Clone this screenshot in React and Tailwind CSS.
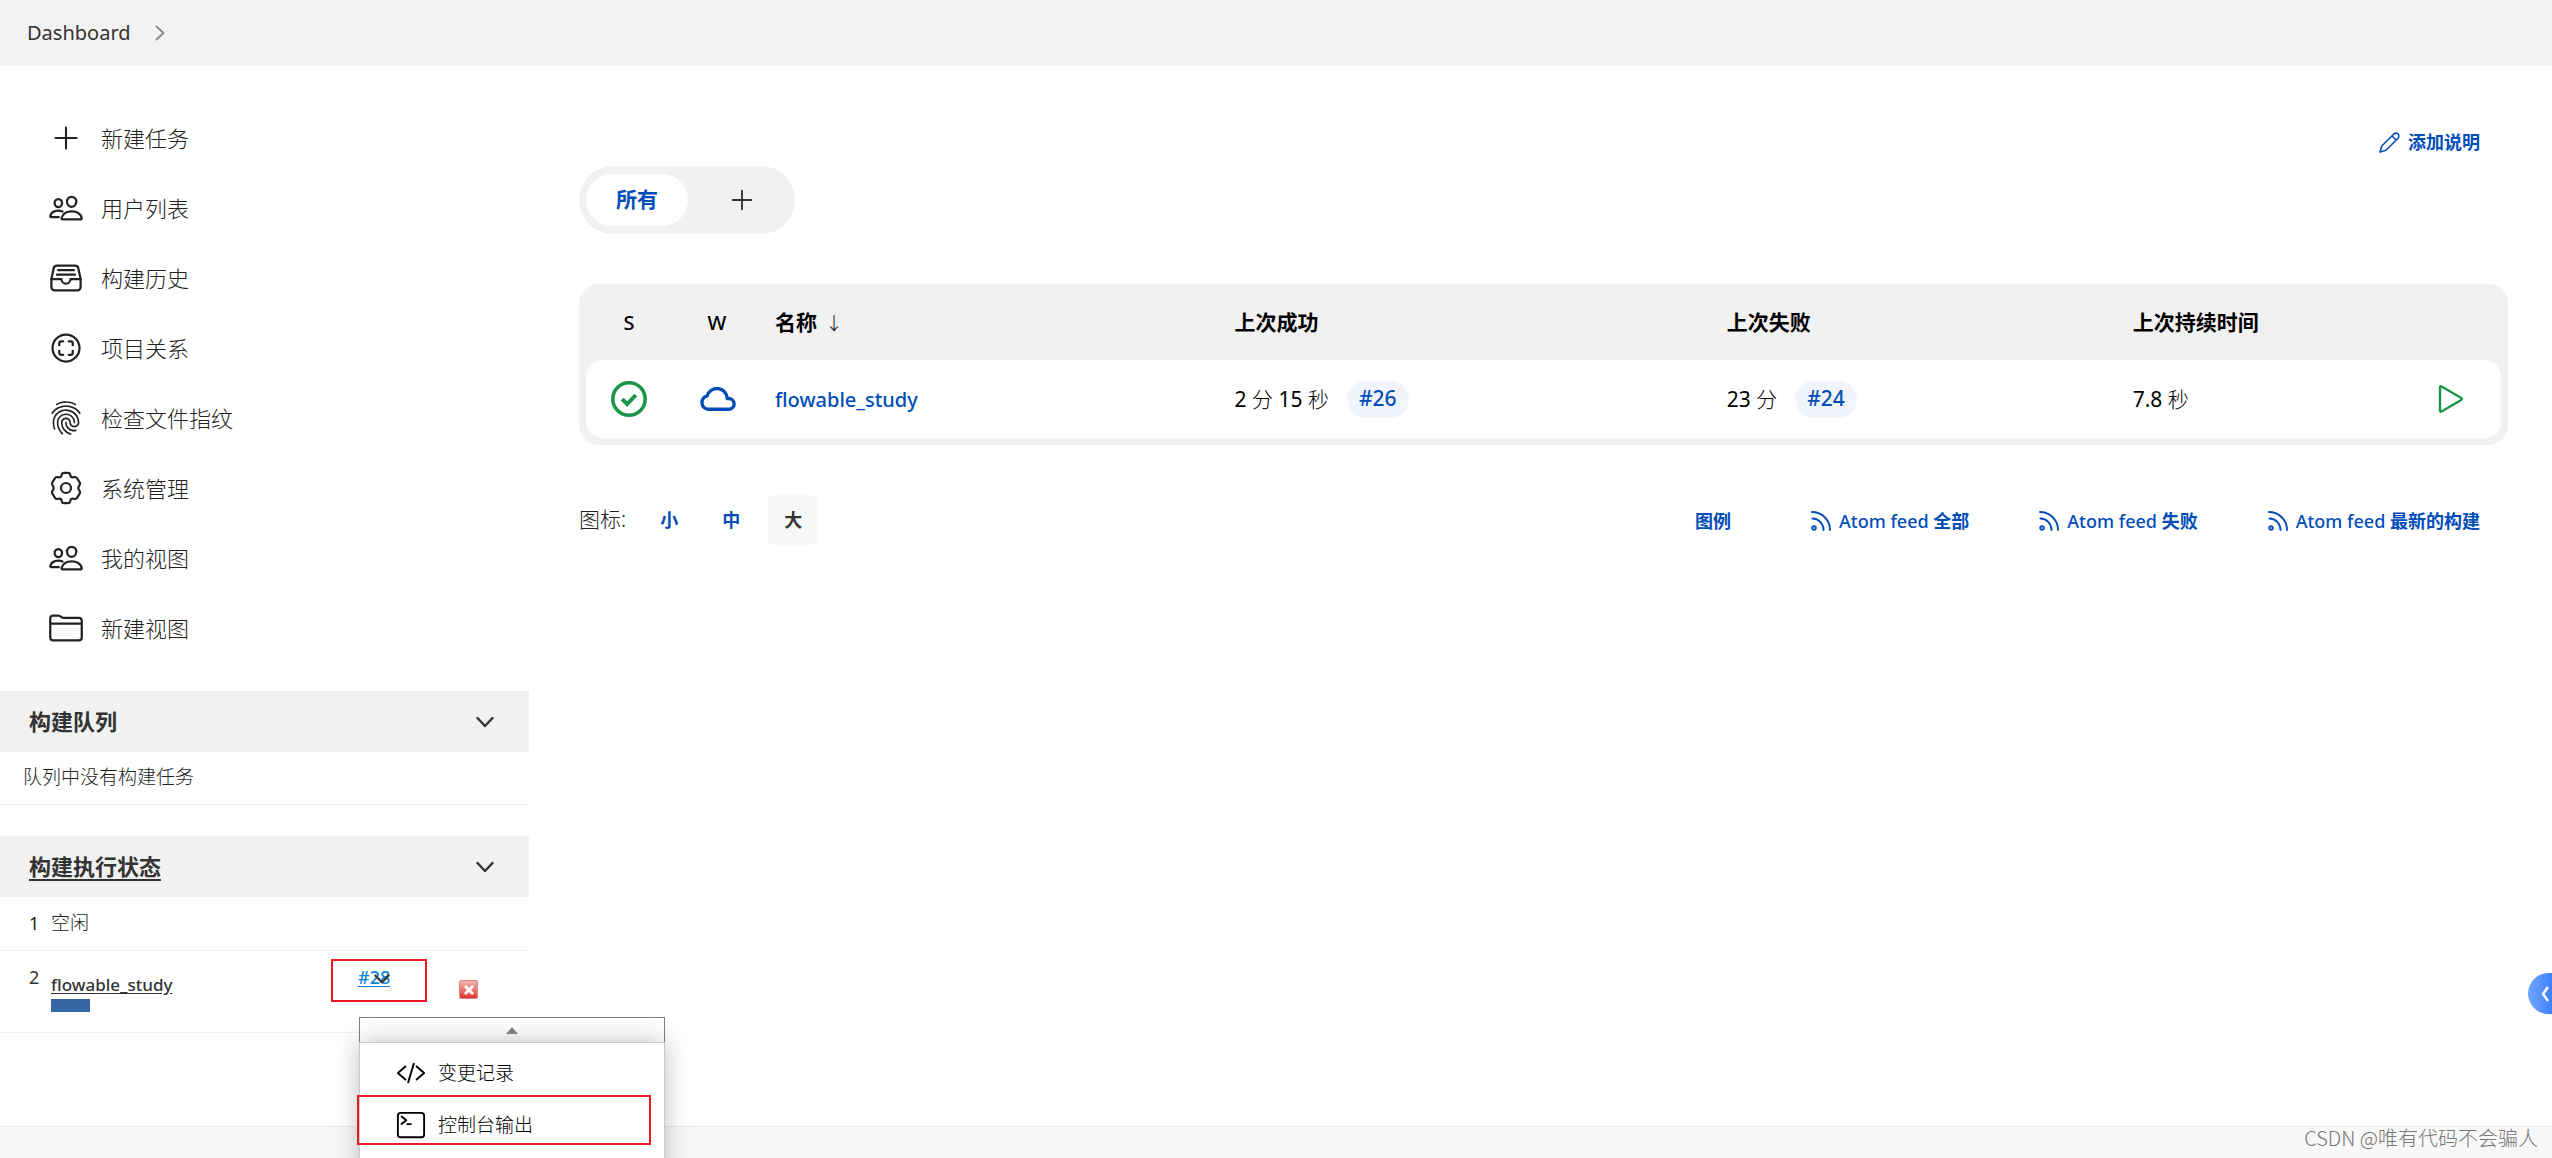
import React from "react";
import {
  IoPeopleOutline,
  IoFileTrayFullOutline,
  IoScanCircleOutline,
  IoFingerPrintOutline,
  IoFolderOutline,
  IoCodeSlashOutline,
  IoTerminalOutline,
} from "react-icons/io5";

function Plus({ className }) {
  return (
    <svg viewBox="0 0 24 24" className={className} fill="none" stroke="currentColor" strokeWidth="1.4" strokeLinecap="round">
      <path d="M12 5v14M5 12h14" />
    </svg>
  );
}

function Gear({ className }) {
  return (
    <svg viewBox="0 0 36 36" className={className} fill="none" stroke="currentColor" strokeWidth="2.2" strokeLinejoin="round">
      <circle cx="18" cy="18" r="5" />
      <path d="M15.800 2.800H20.200Q21.600 2.800 22 4.200L22.500 5.800Q23 7.500 24.800 7.300L26.800 7Q28.300 6.900 29 8.100L31.800 12.600Q32.500 13.800 31.600 15L30.800 16.200Q29.900 18 30.800 19.800L31.600 21Q32.500 22.200 31.800 23.400L29 27.900Q28.300 29.100 26.800 29L24.800 28.700Q23 28.500 22.500 30.200L22 31.800Q21.600 33.200 20.200 33.200H15.800Q14.400 33.200 14 31.800L13.500 30.200Q13 28.500 11.200 28.700L9.200 29Q7.700 29.100 7 27.900L4.200 23.400Q3.500 22.200 4.400 21L5.200 19.800Q6.100 18 5.200 16.200L4.400 15Q3.500 13.800 4.200 12.600L7 8.100Q7.700 6.900 9.200 7L11.200 7.300Q13 7.500 13.500 5.800L14 4.200Q14.400 2.800 15.800 2.800Z" />
    </svg>
  );
}

function Chevron({ className }) {
  return (
    <svg viewBox="0 0 18 18" className={className} fill="none" stroke="currentColor" strokeWidth="2.4" strokeLinecap="round" strokeLinejoin="round">
      <path d="M1.500 5 9 13l7.500-8" />
    </svg>
  );
}

function Rss() {
  return (
    <svg viewBox="0 0 20 20" className="size-5 shrink-0" fill="none" stroke="currentColor" strokeWidth="1.900" strokeLinecap="round">
      <path d="M1 1c10 0 18 8 18 18M1.500 7.500c6 0 11 5 11 11.500" />
      <circle cx="3" cy="17" r="1.800" />
    </svg>
  );
}

function Pencil() {
  return (
    <svg viewBox="0 0 21 21" className="size-[21px] shrink-0" fill="none" stroke="currentColor" strokeWidth="1.600" strokeLinejoin="round">
      <path d="M1 20l1.800-6L14.800 2a2.700 2.700 0 0 1 4.200 4.200L7 18.200zM13 4l4 4" />
    </svg>
  );
}

const tasks = [
  ["新建任务", Plus],
  ["用户列表", IoPeopleOutline],
  ["构建历史", IoFileTrayFullOutline],
  ["项目关系", IoScanCircleOutline],
  ["检查文件指纹", IoFingerPrintOutline],
  ["系统管理", Gear],
  ["我的视图", IoPeopleOutline],
  ["新建视图", IoFolderOutline],
];

function PaneHeader({ children }) {
  return (
    <div className="flex h-[61px] items-center justify-between bg-[#f1f1f1] pr-[35px] pl-[29px]">
      <h2 className="text-[22px] font-bold">{children}</h2>
      <button type="button" aria-label="折叠">
        <Chevron className="size-[18px]" />
      </button>
    </div>
  );
}

function BuildMenu() {
  return (
    <div className="absolute top-[66px] left-[359px] z-10 w-[306px] text-[19px] font-light text-black">
      <button type="button" aria-label="向上滚动" className="flex h-[25px] w-full items-center justify-center border border-b-0 border-[#808080] bg-white">
        <svg viewBox="0 0 12 7" className="h-[7px] w-3">
          <path d="M6 0l6 7H0z" fill="#808080" />
        </svg>
      </button>
      <ul className="h-[140px] border border-[#c3ccd1] bg-white pt-1 shadow-[0_0_24px_rgba(0,0,0,0.25)]">
        <li>
          <a href="#changes" className="flex h-[52px] items-center gap-3 pl-9">
            <IoCodeSlashOutline className="size-[30px]" />
            变更记录
          </a>
        </li>
        <li>
          <a href="#console" className="relative flex h-[52px] items-center gap-3 pl-9">
            <IoTerminalOutline className="size-[30px]" />
            控制台输出
            <span className="absolute -top-1 -left-[3px] h-[50px] w-[294px] border-2 border-[#ed1c24]" />
          </a>
        </li>
      </ul>
    </div>
  );
}

function Sidebar() {
  return (
    <aside className="w-[529px] shrink-0">
      <nav className="pt-[37px] pb-[28px] text-[#222]">
        {tasks.map(([label, Icon]) => (
          <a key={label} href="#task" className="flex h-[70px] items-center gap-[17px] pl-[48px] text-[22px] font-light">
            <Icon className="size-9" />
            {label}
          </a>
        ))}
      </nav>
      <section>
        <PaneHeader>构建队列</PaneHeader>
        <p className="h-[53px] border-b border-[#efefef] pl-[23px] text-[19px] leading-[51px] font-light text-[#222]">队列中没有构建任务</p>
      </section>
      <section className="mt-[31px]">
        <PaneHeader>
          <a href="#executors" className="underline underline-offset-4">构建执行状态</a>
        </PaneHeader>
        <div className="flex h-[54px] items-center border-b border-[#efefef] pl-[29px] text-[19px] font-light text-[#222]">
          <span className="w-[22px] text-[18px] font-normal">1</span>空闲
        </div>
        <div className="relative flex h-[82px] border-b border-[#efefef] pl-[29px] text-[18px]">
          <span className="w-[22px] pt-[13px]">2</span>
          <div className="w-[307px] pt-[20px]">
            <a href="#job" className="block text-[17px] leading-7 font-medium underline underline-offset-2">flowable_study</a>
            <div className="h-[13px] w-[39px] bg-[#3465a4]" />
          </div>
          <a href="#28" className="relative h-7 pt-[13px] font-medium text-[#0b84d8] underline underline-offset-2">
            #28
            <Chevron className="absolute top-[20px] left-[16px] size-4 text-[#333]" />
          </a>
          <span className="absolute top-[8px] left-[331px] h-[43px] w-[96px] border-2 border-[#ed1c24]" />
          <button type="button" aria-label="终止" className="absolute top-[29px] left-[459px] flex size-[19px] items-center justify-center rounded-xs border border-[#e08080] bg-linear-to-b from-[#f0b4b4] to-[#dc3030]">
            <svg viewBox="0 0 10 10" className="size-[10px]" stroke="#fff" strokeWidth="2.800">
              <path d="M1 1l8 8M9 1L1 9" />
            </svg>
          </button>
          <BuildMenu />
        </div>
      </section>
    </aside>
  );
}

function Badge({ children }) {
  return (
    <a href="#build" className="ml-[18px] inline-flex h-[37px] items-center rounded-full bg-[#f1f5fb] px-3 font-medium text-[#004db8]">
      {children}
    </a>
  );
}

function Unit({ children }) {
  return <span className="font-light">{children}</span>;
}

function Feed({ children }) {
  return (
    <a href="#feed" className="flex items-center gap-2">
      <Rss />
      <span className="font-medium">
        Atom feed <b>{children}</b>
      </span>
    </a>
  );
}

function JobTable() {
  return (
    <div className="rounded-[20px] bg-[#f1f1f1] px-[7px] pb-[7px]">
      <table className="w-full table-fixed border-separate border-spacing-0 text-left text-[21px] text-black">
        <colgroup>
          <col className="w-[86px]" />
          <col className="w-[90px]" />
          <col className="w-[24%]" />
          <col className="w-[25.7%]" />
          <col className="w-[21.2%]" />
          <col />
          <col className="w-[100px]" />
        </colgroup>
        <thead>
          <tr className="h-[76px] [&>th]:pt-0.5">
            <th className="text-center text-[20px] font-medium">S</th>
            <th className="text-center text-[20px] font-medium">W</th>
            <th className="pl-[13px] font-bold">
              名称<span className="ml-2 text-[18px] font-light">↓</span>
            </th>
            <th className="pl-[13px] font-bold">上次成功</th>
            <th className="pl-[13px] font-bold">上次失败</th>
            <th className="pl-[13px] font-bold">上次持续时间</th>
            <th aria-label="操作" />
          </tr>
        </thead>
        <tbody>
          <tr className="h-[78px] [&>td]:bg-white">
            <td className="rounded-l-2xl">
              <svg viewBox="0 0 36 36" className="mx-auto size-9" fill="none" stroke="#1b9448">
                <circle cx="18" cy="18" r="16.200" strokeWidth="3.600" />
                <path d="M11.200 18.200l5 5 8.600-9.200" strokeWidth="4" />
              </svg>
            </td>
            <td>
              <svg viewBox="0 0 37 24" className="mx-auto h-6 w-[37px]" fill="none" stroke="#004db8" strokeWidth="3.400" strokeLinejoin="round">
                <path d="M8.500 22.200a6.800 6.800 0 0 1-.3-13.300a10.200 10.200 0 0 1 20 2.600h1.300a5.300 5.300 0 0 1 .5 10.700z" />
              </svg>
            </td>
            <td className="pt-0.5 pl-[13px]">
              <a href="#job" className="text-[20px] font-medium text-[#004db8]">flowable_study</a>
            </td>
            <td className="pl-[13px]">
              2 <Unit>分</Unit> 15 <Unit>秒</Unit>
              <Badge>#26</Badge>
            </td>
            <td className="pl-[13px]">
              23 <Unit>分</Unit>
              <Badge>#24</Badge>
            </td>
            <td className="pt-0.5 pl-[13px]">
              7.8 <Unit>秒</Unit>
            </td>
            <td className="rounded-r-2xl">
              <button type="button" aria-label="构建" className="mx-auto block">
                <svg viewBox="0 0 26 28" className="h-7 w-[26px]" fill="none" stroke="#1b9448" strokeWidth="2.400" strokeLinejoin="round">
                  <path d="M2 2.400Q2 .6 3.600 1.500L23.200 13Q24.700 14 23.200 15L3.600 26.500Q2 27.400 2 25.600Z" />
                </svg>
              </button>
            </td>
          </tr>
        </tbody>
      </table>
    </div>
  );
}

export default function App() {
  return (
    <div className="relative flex min-h-screen flex-col overflow-hidden bg-white font-['Noto_Sans','Noto_Sans_CJK_SC',sans-serif] text-[#333]">
      <header className="flex h-[66px] items-center gap-6 bg-[#f2f2f2] pl-[27px] text-[20px]">
        <a href="#dashboard">Dashboard</a>
        <svg viewBox="0 0 10 16" className="h-4 w-[10px]" fill="none" stroke="#888" strokeWidth="1.800" strokeLinecap="round" strokeLinejoin="round">
          <path d="M1.500 1.500 8.500 8l-7 6.500" />
        </svg>
      </header>
      <div className="flex grow">
        <Sidebar />
        <main className="min-w-0 grow pr-[44px] pl-[50px]">
          <div className="flex h-[100px] justify-end pt-[61px] pr-[28px]">
            <a href="#edit" className="flex h-[30px] items-center gap-2 text-[18px] font-bold text-[#004db8]">
              <Pencil />
              添加说明
            </a>
          </div>
          <div className="flex">
            <div className="flex h-[68px] items-center rounded-full bg-[#f1f1f1] px-[7px]">
              <a href="#all" className="flex h-[52px] items-center rounded-full bg-white px-[30px] text-[21px] font-bold text-[#004db8]">所有</a>
              <a href="#new-view" aria-label="新建视图" className="pr-[30px] pl-[38px]">
                <Plus className="size-8" />
              </a>
            </div>
          </div>
          <div className="mt-[50px]">
            <JobTable />
          </div>
          <div className="mt-[50px] flex items-center justify-between pr-[28px] text-[18px]">
            <div className="flex items-center">
              <span className="mr-[18px] text-[21px] font-light text-[#222]">图标:</span>
              <div className="flex items-center gap-3 font-bold text-[#004db8]">
                <button type="button" className="size-[50px]">小</button>
                <button type="button" className="size-[50px]">中</button>
                <button type="button" className="size-[50px] rounded-md bg-[#f8f8f8] text-[#333]">大</button>
              </div>
            </div>
            <div className="flex items-center gap-[70px] pt-0.5 text-[#004db8]">
              <a href="#legend" className="mr-[10px] font-bold">图例</a>
              <Feed>全部</Feed>
              <Feed>失败</Feed>
              <Feed>最新的构建</Feed>
            </div>
          </div>
        </main>
      </div>
      <footer className="flex h-8 justify-end border-t border-[#ececec] bg-[#f8f8f8] pr-[14px] font-['Noto_Sans_CJK_SC',sans-serif] text-[20px] leading-[22px] font-light text-[#777]">
        CSDN @唯有代码不会骗人
      </footer>
      <button type="button" aria-label="展开侧栏" className="absolute top-[973px] right-0 flex h-[41px] w-6 items-center justify-end rounded-l-full bg-linear-to-r from-[#72a5ff] to-[#3f80ff] pr-[3px]">
        <svg viewBox="0 0 8 16" className="h-4 w-2" fill="none" stroke="#fff" strokeWidth="2.500">
          <path d="M7 1 2 8l5 7" />
        </svg>
      </button>
    </div>
  );
}
